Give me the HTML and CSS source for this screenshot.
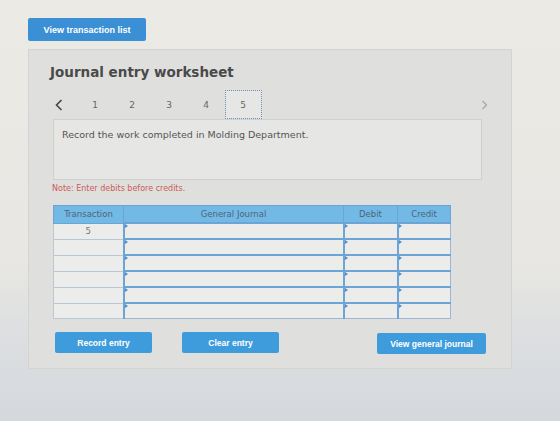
FILE: index.html
```html
<!DOCTYPE html>
<html lang="en">
<head>
  <meta charset="UTF-8" />
  <meta name="viewport" content="width=device-width, initial-scale=1.0"/>
  <title>Journal entry worksheet</title>
  <link rel="stylesheet" href="styles.css">
</head>
<body>

  <div class="page">
    <button class="btn btnTop">View transaction list</button>

    <div class="panel">
      <h2 class="title">Journal entry worksheet</h2>

      <div class="pager">
        <span class="arrow prev">
          <svg width="8" height="12" viewBox="0 0 8 12"><path d="M6.5 1 L1.5 6 L6.5 11" fill="none" stroke="#444" stroke-width="1.6"/></svg>
        </span>
        <span class="step">1</span>
        <span class="step">2</span>
        <span class="step">3</span>
        <span class="step">4</span>
        <span class="step current">5</span>
        <span class="arrow next">
          <svg width="7" height="10" viewBox="0 0 7 10"><path d="M1.5 1 L5.5 5 L1.5 9" fill="none" stroke="#a8a8a8" stroke-width="1.3"/></svg>
        </span>
      </div>

      <div class="prompt">Record the work completed in Molding Department.</div>

      <p class="note">Note: Enter debits before credits.</p>

      <table class="journal">
        <colgroup>
          <col class="colTx">
          <col class="colGj">
          <col class="colDebit">
          <col class="colCredit">
        </colgroup>
        <thead>
          <tr>
            <th>Transaction</th>
            <th>General Journal</th>
            <th>Debit</th>
            <th>Credit</th>
          </tr>
        </thead>
        <tbody>
          <tr><td class="tx">5</td><td class="entry"></td><td class="entry"></td><td class="entry"></td></tr>
          <tr><td class="tx"></td><td class="entry"></td><td class="entry"></td><td class="entry"></td></tr>
          <tr><td class="tx"></td><td class="entry"></td><td class="entry"></td><td class="entry"></td></tr>
          <tr><td class="tx"></td><td class="entry"></td><td class="entry"></td><td class="entry"></td></tr>
          <tr><td class="tx"></td><td class="entry"></td><td class="entry"></td><td class="entry"></td></tr>
          <tr><td class="tx"></td><td class="entry"></td><td class="entry"></td><td class="entry"></td></tr>
        </tbody>
      </table>

      <div class="actions">
        <button class="btn btnAction">Record entry</button>
        <button class="btn btnAction clear">Clear entry</button>
        <button class="btn btnAction viewJournal">View general journal</button>
      </div>
    </div>
  </div>

</body>
</html>
```

FILE: styles.css
```css
html, body {
  margin: 0;
  height: 100%;
}

body {
  width: 560px;
  height: 421px;
  overflow: hidden;
  font-family: "DejaVu Sans", Verdana, sans-serif;
  color: #555;
  background: linear-gradient(to bottom, #eceae5 0%, #e8e7e3 62%, #dcdee0 80%, #d5d9de 100%);
}

.page {
  padding: 18px 0 0 28px;
}

.btn {
  display: block;
  border: none;
  border-radius: 2px;
  color: #fff;
  font-family: "Liberation Sans", Arial, sans-serif;
  font-weight: bold;
  cursor: pointer;
  padding: 0;
}

.btnTop {
  width: 118px;
  height: 23px;
  font-size: 9px;
  background: #3b8fd5;
  margin-bottom: 8px;
}

.panel {
  width: 484px;
  height: 320px;
  box-sizing: border-box;
  padding-top: 14px;
  background: #dfdfdd;
  border: 1px solid #d4d4d2;
}

.title {
  margin: 0 0 0 21px;
  font-size: 13.5px;
  line-height: 16px;
  font-weight: bold;
  color: #4a4a4a;
}

/* step navigation */
.pager {
  display: flex;
  align-items: center;
  width: 437px;
  height: 29px;
  margin: 10px 0 0 24px;
  font-size: 9px;
  color: #666;
}

.arrow {
  display: flex;
  align-items: center;
}

.prev {
  width: 23.5px;
  padding-left: 2px;
  box-sizing: border-box;
}

.next {
  margin-left: auto;
  margin-right: 2px;
}

.step {
  width: 37px;
  text-align: center;
}

.current {
  height: 29px;
  line-height: 29px;
  box-sizing: border-box;
  border: 1px dotted #6b8fb8;
  background: #e6e6e4;
}

.prompt {
  width: 429px;
  height: 61px;
  box-sizing: border-box;
  margin-left: 24px;
  padding: 9px 8px;
  font-size: 9.5px;
  line-height: 12px;
  background: #e6e6e4;
  border: 1px solid #d0d0ce;
  color: #555;
}

.note {
  margin: 4px 0 0 23px;
  font-size: 8px;
  line-height: 10px;
  color: #cd5a5a;
}

/* journal grid */
.journal {
  margin: 11px 0 0 24px;
  width: 397px;
  border-collapse: collapse;
  table-layout: fixed;
  font-size: 8.5px;
}

.colTx { width: 70px; }
.colGj { width: 220px; }
.colDebit { width: 54px; }
.colCredit { width: 53px; }

.journal th {
  height: 16px;
  padding: 0;
  font-weight: normal;
  line-height: 14px;
  color: #4d6578;
  background: #73b9e6;
  border: 1px solid #6aa6d4;
}

.journal td {
  height: 14px;
  padding: 0;
  line-height: 12px;
  border: 1px solid #9ab8d6;
  background: #ececea;
}

.journal td.tx {
  text-align: center;
  color: #777;
  border-color: #b9c8d6;
}

.journal td.entry {
  position: relative;
  border-top: 2px solid #6ca4d6;
  border-left: 2px solid #6ca4d6;
}

/* small blue tab marking each input cell */
.journal td.entry::before {
  content: "";
  position: absolute;
  top: 0;
  left: 0;
  border-top: 2.5px solid transparent;
  border-bottom: 2.5px solid transparent;
  border-left: 3px solid #4d8fcf;
}

.actions {
  display: flex;
  align-items: flex-start;
  width: 431px;
  margin: 13px 0 0 26px;
}

.btnAction {
  width: 97px;
  height: 21px;
  font-size: 8.5px;
  background: #3f9cdc;
}

.clear {
  margin-left: 30px;
}

.viewJournal {
  width: 109px;
  margin-left: auto;
  margin-top: 1px;
}
```
